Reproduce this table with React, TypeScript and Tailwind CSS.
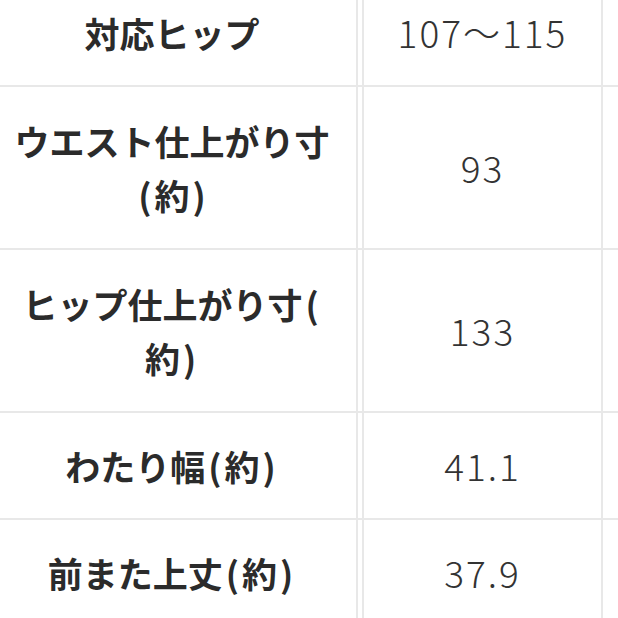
import React from "react";

const P = ({ c }: { c: string }) => <span className="mx-[3px]">{c}</span>;

const rows: { label: React.ReactNode; value: string; h: string }[] = [
  { label: "対応ヒップ", value: "107〜115", h: "h-[107px]" },
  {
    label: (
      <>
        ウエスト仕上がり寸
        <br />
        <P c="(" />約<P c=")" />
      </>
    ),
    value: "93",
    h: "h-[163px]",
  },
  {
    label: (
      <>
        ヒップ仕上がり寸<P c="(" />
        <br />
        約<P c=")" />
      </>
    ),
    value: "133",
    h: "h-[163px]",
  },
  { label: <>わたり幅<P c="(" />約<P c=")" /></>, value: "41.1", h: "h-[107px]" },
  { label: <>前また上丈<P c="(" />約<P c=")" /></>, value: "37.9", h: "h-[107px]" },
];

export default function App() {
  return (
    <div
      className="w-[618px] h-[618px] overflow-hidden bg-white text-[#2b2b2b]"
      style={{ fontFamily: '"Noto Sans CJK JP", "Noto Sans", sans-serif' }}
    >
      <div className="-mt-[20px] flex flex-col">
        {rows.map((r, i) => (
          <div key={i} className={`flex shrink-0 border-b-2 border-[#e8e8e8] ${r.h}`}>
            <div className="w-[358px] shrink-0 border-r-2 border-[#e8e8e8] flex items-center justify-center pr-[12px] text-[35px] font-bold leading-[54px] text-center whitespace-nowrap">
              <div>{r.label}</div>
            </div>
            <div className="ml-[4px] w-[241px] shrink-0 border-l-2 border-r-2 border-[#e8e8e8] flex items-center justify-center text-[37px] tracking-[2px] font-light text-[#333]">
              {r.value}
            </div>
            <div className="flex-1"></div>
          </div>
        ))}
      </div>
    </div>
  );
}
